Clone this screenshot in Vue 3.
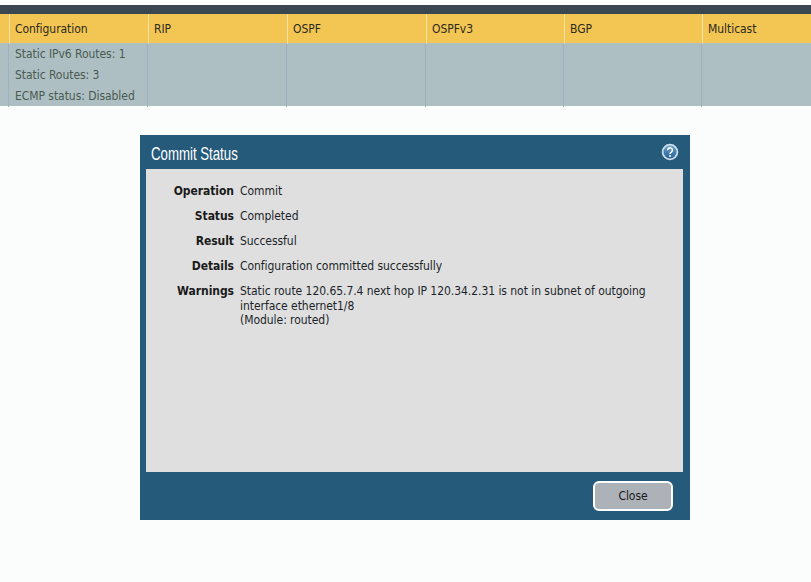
<script setup>
const cols = ['Configuration', 'RIP', 'OSPF', 'OSPFv3', 'BGP', 'Multicast']
const stats = ['Static IPv6 Routes: 1', 'Static Routes: 3', 'ECMP status: Disabled']
const rows = [
  { label: 'Operation', lines: ['Commit'] },
  { label: 'Status', lines: ['Completed'] },
  { label: 'Result', lines: ['Successful'] },
  { label: 'Details', lines: ['Configuration committed successfully'] },
  { label: 'Warnings', lines: ['Static route 120.65.7.4 next hop IP 120.34.2.31 is not in subnet of outgoing', 'interface ethernet1/8', '(Module: routed)'] }
]
</script>

<template>
  <div class="page">
    <div class="topbar"></div>
    <div class="thead">
      <div class="lead"></div>
      <div v-for="c in cols" :key="c" class="th">{{ c }}</div>
    </div>
    <div class="tbody">
      <div class="lead"></div>
      <div class="td first">
        <div v-for="s in stats" :key="s" class="stat">{{ s }}</div>
      </div>
      <div v-for="n in 5" :key="n" class="td"></div>
    </div>
    <div class="modal">
      <div class="mhead">
        <span class="mtitle">Commit Status</span>
        <svg class="help" width="18" height="18" viewBox="0 0 18 18">
          <defs>
            <linearGradient id="hg" x1="0" y1="0" x2="0" y2="1">
              <stop offset="0" stop-color="#6fa3cc" />
              <stop offset="1" stop-color="#1f5f95" />
            </linearGradient>
          </defs>
          <circle cx="9" cy="9" r="7.4" fill="url(#hg)" stroke="#c9dbe8" stroke-width="1.8" />
          <path d="M6.6 7.2a2.4 2.3 0 1 1 3.7 1.9c-.9.6-1.3 1-1.3 1.9" fill="none" stroke="#fff" stroke-width="1.6" />
          <circle cx="9" cy="13" r="1" fill="#fff" />
        </svg>
      </div>
      <div class="mbody">
        <div v-for="r in rows" :key="r.label" class="row">
          <div class="label">{{ r.label }}</div>
          <div class="value">
            <div v-for="l in r.lines" :key="l">{{ l }}</div>
          </div>
        </div>
      </div>
      <div class="mfoot">
        <button class="close">Close</button>
      </div>
    </div>
  </div>
</template>

<style>
html, body { margin: 0; background: #fbfdfc; }
</style>

<style scoped>
.page {
  width: 811px;
  height: 582px;
  overflow: hidden;
  background: #fbfdfc;
  font-family: "DejaVu Sans Condensed", "DejaVu Sans", sans-serif;
  font-size: 12px;
  letter-spacing: -0.05px;
  padding-top: 5px;
  box-sizing: border-box;
}
.topbar { height: 9px; background: #3a4650; }
.thead, .tbody { display: grid; }
.thead {
  grid-template-columns: 9px 139px 139px 139px 138px 138px 109px;
  height: 29px;
  background: #f3c553;
}
.tbody {
  grid-template-columns: 8px 139px 139px 139px 138px 138px 110px;
  height: 63px;
  background: #adbfc3;
}
.th {
  border-left: 1px solid #f9e2a6;
  padding-left: 5px;
  padding-top: 1px;
  line-height: 29px;
  color: #2b2a22;
}
.td { border-left: 1px solid #9db1bf; padding-left: 6px; padding-top: 1px; }
.stat { height: 21px; line-height: 21px; color: #4a5a50; white-space: nowrap; }
.modal {
  width: 550px;
  height: 385px;
  margin: 29px 0 0 140px;
  background: #255a7a;
  display: flex;
  flex-direction: column;
}
.mhead {
  height: 34px;
  flex: none;
  display: flex;
  align-items: center;
  justify-content: space-between;
  padding: 0 11px 0 11px;
}
.mtitle {
  font-family: "Liberation Sans", sans-serif;
  font-size: 18px;
  letter-spacing: 0;
  color: #fff;
  transform: scaleX(0.735);
  transform-origin: left center;
  margin-top: 4px;
}
.help { margin-top: -1px; }
.mbody {
  height: 303px;
  flex: none;
  margin: 0 7px 0 6px;
  background: #dfdfdf;
  padding-top: 14px;
  box-sizing: border-box;
}
.row { display: flex; margin-bottom: 8px; color: #1c1f2a; line-height: 17px; }
.label {
  width: 88px;
  flex: none;
  text-align: right;
  font-weight: 700;
  color: #1a1a1a;
  margin-right: 6px;
}
.value { white-space: nowrap; line-height: 14.5px; padding-top: 1px; }
.mfoot {
  flex: 1;
  display: flex;
  align-items: flex-start;
  justify-content: flex-end;
  padding: 9px 17px 0 0;
}
.close {
  width: 80px;
  height: 30px;
  background: #adb1b8;
  border: 2px solid #fff;
  border-radius: 6px;
  font: inherit;
  letter-spacing: inherit;
  color: #1a1a1a;
  padding: 0;
}
</style>
